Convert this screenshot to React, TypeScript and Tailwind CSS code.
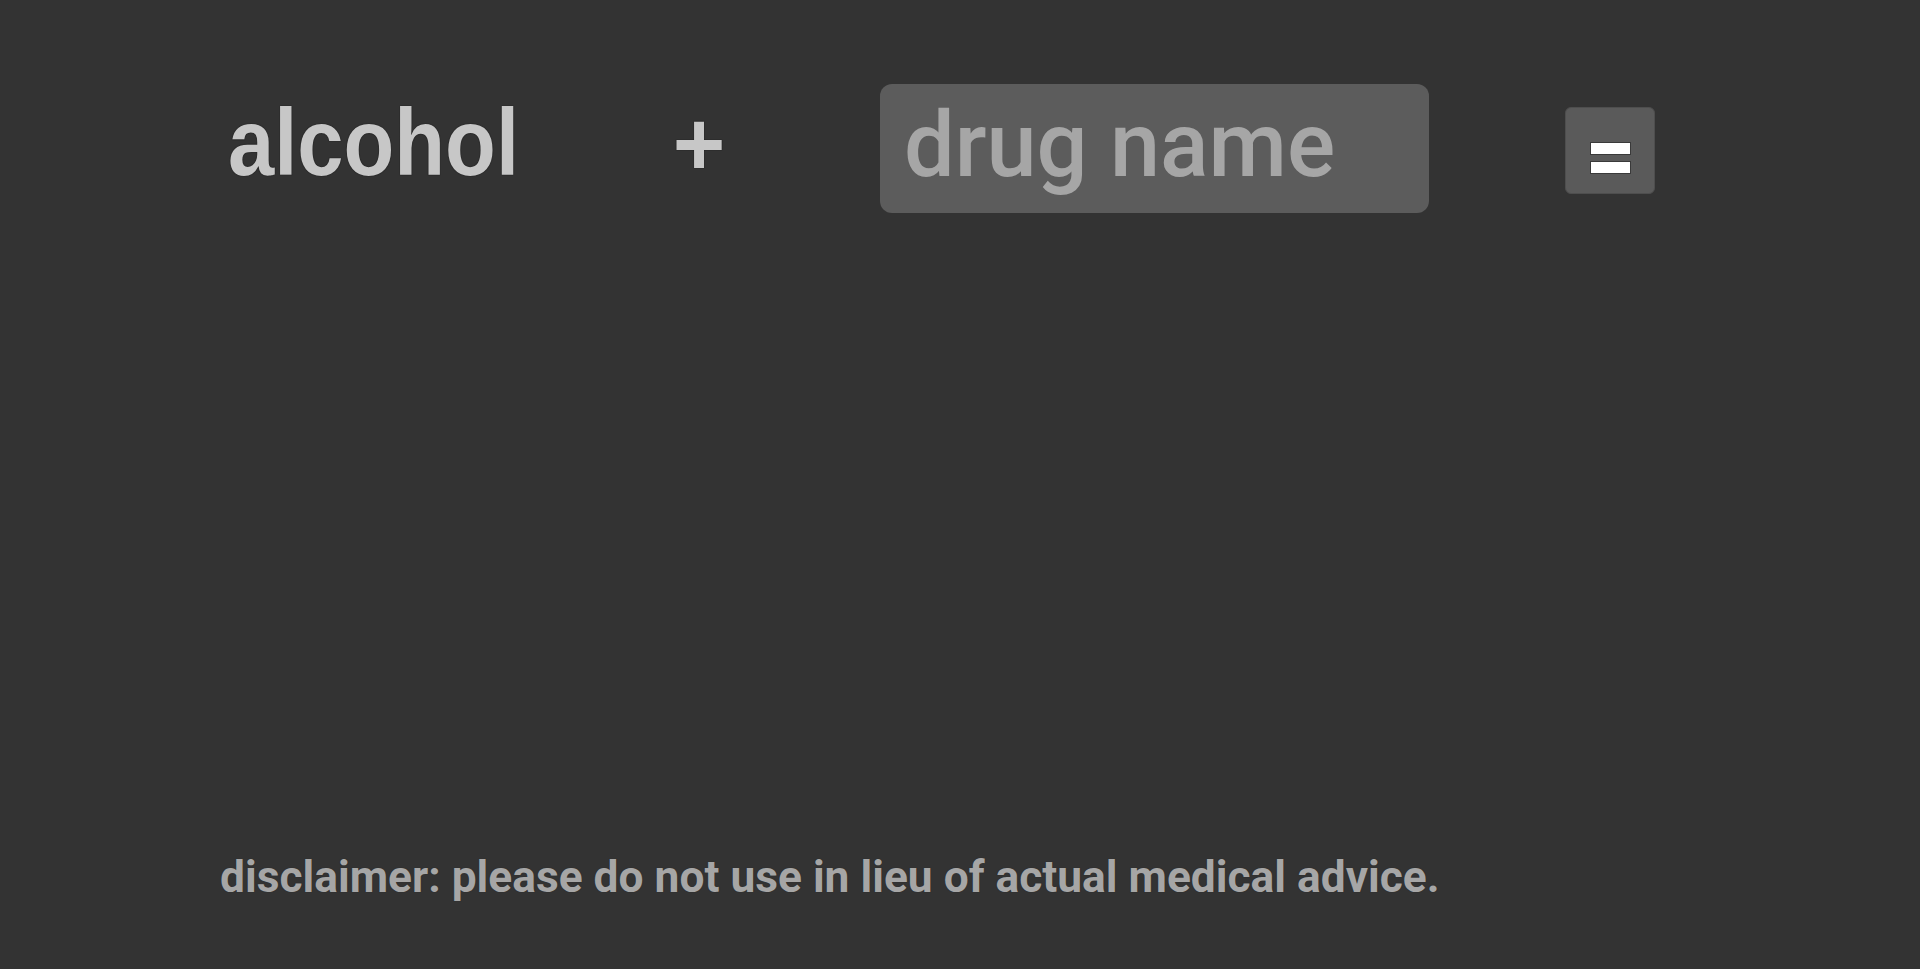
import React from 'react';

export default function App() {
    return (
        <div className="min-h-screen w-full bg-[#333333] flex flex-col" style={{ fontFamily: 'Roboto, "Liberation Sans", sans-serif' }}>
            {/* top row */}
            <div className="flex items-center h-[129px] mt-[84px]">
                <div className="ml-[228px] w-[300px] -translate-y-[6px]">
                    <span className="inline-block origin-left scale-x-[0.875] font-['Liberation_Sans',_sans-serif] font-bold text-[95px] leading-none text-[#c7c7c7] [text-shadow:0_0_1px_#1a1a1a,0_0_1px_#1a1a1a]">
                        alcohol
                    </span>
                </div>
                <div className="ml-[148px] w-[46px] flex justify-center -translate-y-[5px] font-['Liberation_Sans',_sans-serif] font-bold text-[90px] leading-none text-[#c7c7c7] [text-shadow:0_0_1px_#1a1a1a,0_0_1px_#1a1a1a]">
                    +
                </div>
                <input
                    type="text"
                    placeholder="drug name"
                    className="ml-[158px] w-[549px] h-[129px] rounded-[12px] bg-[#5c5c5c] pl-[24px] pr-[24px] pb-[6px] text-[90px] font-medium text-[#c7c7c7] placeholder:text-[#a6a6a6] outline-none font-['Roboto',_sans-serif]"
                />
                <button className="ml-[136px] w-[90px] h-[87px] translate-y-[2px] rounded-[6px] bg-[#5a5a5a] border border-[#4e4e4e] flex flex-col items-center justify-center gap-[6px] pt-[14px]">
                    <span className="block w-[41px] h-[13px] bg-white border border-[#3a3a3a]" />
                    <span className="block w-[41px] h-[13px] bg-white border border-[#3a3a3a]" />
                </button>
            </div>

            <div className="flex-1" />

            {/* disclaimer */}
            <p className="ml-[220px] mb-[70px] text-[44.3px] font-bold text-[#a6a6a6] leading-none [text-shadow:0_0_1px_#262626]">
                disclaimer: please do not use in lieu of actual medical advice.
            </p>
        </div>
    );
}
